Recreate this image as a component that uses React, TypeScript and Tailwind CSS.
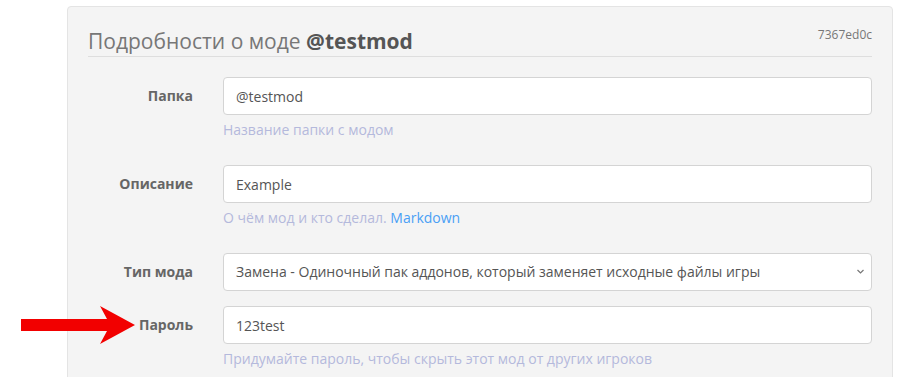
import React from 'react';

const font = { fontFamily: '"Open Sans", "Noto Sans", sans-serif' };

function Help({ children }: { children: React.ReactNode }) {
    return <div className="mt-[5px] mb-[10px] text-sm leading-5 text-[#b4b9dc]">{children}</div>;
}

function Row({ label, children }: { label: string; children: React.ReactNode }) {
    return (
        <div className="flex mb-[15px]">
            <label className="w-[105px] shrink-0 h-[38px] flex items-center justify-end text-sm font-bold text-[#666]">
                {label}
            </label>
            <div className="ml-[30px] flex-1">{children}</div>
        </div>
    );
}

function TextInput({ value }: { value: string }) {
    return (
        <input
            readOnly
            value={value}
            className="w-full h-[38px] px-3 bg-white border border-[#d4d4d4] rounded-[4px] text-sm text-[#555] outline-none"
            style={font}
        />
    );
}

export default function App() {
    return (
        <div className="relative w-[901px] h-[377px] overflow-hidden bg-white" style={font}>
            {/* Panel */}
            <div className="ml-[67px] mt-[6px] w-[826px] h-[420px] bg-[#f4f4f4] border border-[#e4e4e4] rounded-[4px] px-5 pt-[19px]">
                <div className="flex justify-between items-start border-b border-[#dedede]">
                    <h3 className="text-[21px] leading-[30px] text-[#777]">
                        Подробности о моде <span className="font-bold text-[#555]">@testmod</span>
                    </h3>
                    <span className="text-xs leading-[18px] text-[#777]">7367ed0c</span>
                </div>

                <div className="mt-5">
                    <Row label="Папка">
                        <TextInput value="@testmod" />
                        <Help>Название папки с модом</Help>
                    </Row>
                    <Row label="Описание">
                        <TextInput value="Example" />
                        <Help>
                            О чём мод и кто сделал. <span className="text-[#4a9ff5]">Markdown</span>
                        </Help>
                    </Row>
                    <Row label="Тип мода">
                        <div className="relative">
                            <select
                                className="w-full h-[38px] pl-3 pr-8 bg-white border border-[#d4d4d4] rounded-[4px] text-sm text-[#555] appearance-none outline-none"
                                style={font}
                            >
                                <option>Замена - Одиночный пак аддонов, который заменяет исходные файлы игры</option>
                            </select>
                            <svg className="absolute right-[7px] top-[15px] pointer-events-none" width="9" height="7" viewBox="0 0 9 7">
                                <path d="M1.5 2 L4.5 5 L7.5 2" fill="none" stroke="#777" strokeWidth="1.2" />
                            </svg>
                        </div>
                    </Row>
                    <Row label="Пароль">
                        <TextInput value="123test" />
                        <Help>Придумайте пароль, чтобы скрыть этот мод от других игроков</Help>
                    </Row>
                </div>
            </div>

            {/* Red arrow */}
            <svg className="absolute left-0 top-0" width="140" height="377" viewBox="0 0 140 377">
                <polygon points="21,319 107,319 100,306 135,325 100,344 107,331 21,331" fill="#f20000" />
            </svg>
        </div>
    );
}
